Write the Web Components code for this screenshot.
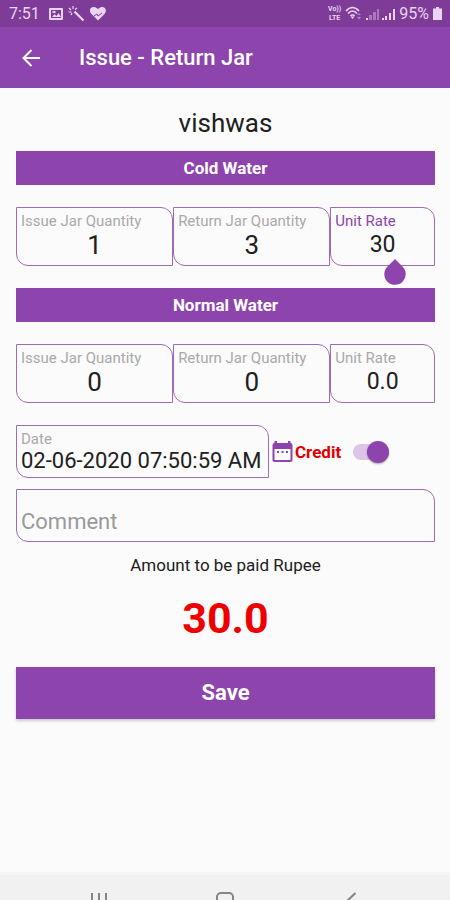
<!DOCTYPE html>
<html lang="en">
<head>
<meta charset="utf-8">
<meta name="viewport" content="width=device-width, initial-scale=1">
<title>Issue - Return Jar</title>
<style>
:root { --brand: #8e44ad; --brand-dark: #7e3c98; --page: #fbfbfb; --hint: #a9a9a9; --ink: #202020; }
body { margin: 0; background: var(--page); color: var(--ink); font-family: Roboto, "Liberation Sans", sans-serif; }
</style>
</head>
<body>
<issue-return-screen></issue-return-screen>
<script>
const define = (name, html, setup) => customElements.define(name, class extends HTMLElement {
  constructor() {
    super();
    this.attachShadow({ mode: 'open' }).innerHTML = html;
  }
  connectedCallback() { if (setup) setup(this, this.shadowRoot); }
});

define('status-bar', `
<style>
:host { display: flex; align-items: center; justify-content: space-between; height: 27px; padding: 0 8px 0 9px; background: var(--brand-dark); color: #e9d5f1; font-size: 16px; line-height: 20px; }
div { display: flex; align-items: center; gap: 4px; }
.left { gap: 9px; }
.lte { display: grid; font-size: 7px; line-height: 9px; font-weight: 700; text-align: center; }
svg { display: block; fill: currentColor; }
</style>
<div class="left">
  <span>7:51</span>
  <svg width="58" height="16" viewBox="0 0 58 16" aria-hidden="true">
    <path fill-rule="evenodd" d="M1 2h12q1 0 1 1v10q0 1-1 1H1q-1 0-1-1V3q0-1 1-1zm1 2v8h10V4zm1 7 2.500-3 2 2 2-3L12 11zM3.500 5h3v2h-3z"/>
    <path d="m25.500 5.500 9 9" stroke="currentColor" stroke-width="2.200"/>
    <path d="M24 0v3M20 2l2 2M19.500 6h3M28 2l-2 1.500M22 9l1-2" stroke="currentColor" stroke-width="1.200"/>
    <path d="M49 14.500 42.500 8C38 3 44-2 49 3c5-5 10.500 0 6.500 5z"/>
    <path d="m45 10 3-2 1 2 4-3" fill="none" stroke="#7e3c98"/>
  </svg>
</div>
<div>
  <span class="lte"><span>Vo))</span><span>LTE</span></span>
  <svg width="17" height="15" viewBox="0 0 17 15" aria-hidden="true">
    <path d="M1 5q6.500-7 13 0M3 7.500q4.500-5 9 0M5.500 10q2-2.500 4 0" fill="none" stroke="currentColor" stroke-width="1.700"/>
    <path d="m7.500 13-2-2.500h4z"/><path d="m12 9 2-2 2 2zm0 2h4l-2 2.500z" opacity=".5"/>
  </svg>
  <svg width="29" height="14" viewBox="0 0 29 14" aria-hidden="true">
    <path d="M0 11h2v2H0z"/><path d="M3 8h3v5H3zm4-3h3v8H7zm4-3h2v11h-2z" opacity=".4"/>
    <path d="M16 11h2v2h-2zm3-2h2v4h-2zm4-3h2v7h-2zm4-4h2v11h-2z"/>
  </svg>
  <span>95%</span>
  <svg width="9" height="13" viewBox="0 0 9 13" aria-hidden="true"><path d="M3 0h3v1.500h3V13H0V1.500h3z"/></svg>
</div>`);

define('app-bar', `
<style>
:host { display: flex; align-items: center; gap: 36px; height: 61px; padding: 0 19px; background: var(--brand); color: #fff; }
button { display: grid; place-items: center; width: 24px; height: 24px; padding: 0; border: 0; background: none; color: inherit; }
h1 { margin: 0; font-size: 22px; line-height: 28px; font-weight: 500; }
</style>
<button type="button" aria-label="Back"><svg width="24" height="24" viewBox="0 0 24 24" fill="none" stroke="currentColor" stroke-width="2"><path d="M21 12H4.500M12.500 4l-8 8 8 8"/></svg></button>
<h1><slot></slot></h1>`);

define('section-band', `
<style>
:host { display: block; background: var(--brand); color: #fff; }
h2 { margin: 0; padding: 6px; font-size: 17px; line-height: 22px; font-weight: 700; text-align: center; }
</style>
<h2><slot></slot></h2>`);

define('text-field', `
<style>
:host { display: block; min-width: 0; box-sizing: border-box; padding: 3px 4px; border: 1px solid #a06bb5; border-radius: 0 12px 0 12px; }
label { display: block; font-size: 15px; line-height: 20px; color: var(--hint); }
input { display: block; box-sizing: border-box; width: 100%; min-width: 0; height: 28px; margin-bottom: 3px; padding: 0; border: 0; outline: 0; background: none; color: var(--ink); font: 26px/28px Roboto, "Liberation Sans", sans-serif; text-align: center; }
input::placeholder { color: #999; opacity: 1; }
:host([active]) label { color: var(--brand); }
:host([kind="rate"]) input { font-size: 23px; }
:host([kind="date"]) input { height: 24px; font-size: 22px; line-height: 24px; text-align: left; margin-bottom: 1px; }
:host([kind="comment"]) { padding-top: 18px; }
:host([kind="comment"]) input { font-size: 22px; text-align: left; margin-bottom: 2px; }
</style>
<label for="value"></label><input id="value" type="text">`, (host, root) => {
  const label = root.querySelector('label'), input = root.querySelector('input');
  input.value = host.getAttribute('value') || '';
  if (host.getAttribute('kind') === 'comment') {
    label.remove();
    input.placeholder = host.getAttribute('label');
    input.setAttribute('aria-label', host.getAttribute('label'));
  } else label.textContent = host.getAttribute('label');
});

define('field-row', `
<style>
:host { display: grid; grid-template-columns: 3fr 3fr 2fr; margin: 22px 0; }
</style>
<slot></slot>`);

define('caret-handle', `
<style>
:host { position: absolute; left: 50%; top: 100%; margin-top: -8px; z-index: 1; }
svg { display: block; }
</style>
<svg width="24" height="27" viewBox="0 0 24 27" aria-hidden="true"><path fill="#8e44ad" d="m12 1 7.500 7.500a10.700 10.700 0 1 1-15 0z"/></svg>`);

define('field-anchor', `
<style>:host { display: grid; position: relative; min-width: 0; }</style>
<slot></slot>`);

define('credit-switch', `
<style>
:host { display: block; }
label { display: flex; align-items: center; gap: 12px; color: #e00000; font-size: 17px; line-height: 22px; font-weight: 700; }
input { appearance: none; display: flex; align-items: center; justify-content: flex-end; width: 36px; height: 16px; margin: 0; border-radius: 8px; background: #dcc5e6; }
input::before { content: ""; width: 22px; height: 22px; border-radius: 50%; background: var(--brand); box-shadow: 0 1px 2px #0005; }
input:not(:checked) { justify-content: flex-start; }
</style>
<label for="credit">Credit<input id="credit" type="checkbox" role="switch" checked></label>`);

define('date-row', `
<style>
:host { display: flex; align-items: center; margin-bottom: 11px; }
text-field { flex: 0 1 253px; }
button { display: block; margin: 0 2px 0 3px; padding: 0; border: 0; background: none; }
svg { display: block; }
</style>
<text-field kind="date" label="Date" value="02-06-2020 07:50:59 AM"></text-field>
<button type="button" aria-label="Pick a date"><svg width="21" height="24" viewBox="0 0 21 24"><path fill="#8e44ad" fill-rule="evenodd" d="M2.500 1h2.500v2h11V1h2.500v2q2 0 2 2v15q0 2-2 2h-16q-2 0-2-2V5q0-2 2-2zM2.500 9v11h16V9z"/><path fill="#8e44ad" d="M5 11h2v2H5zm4.500 0h2v2h-2zm4.500 0h2v2h-2z"/></svg></button>
<credit-switch></credit-switch>`);

define('amount-due', `
<style>
:host { display: block; text-align: center; }
p { margin: 0; padding: 12px 0 14px; font-size: 17px; line-height: 22px; }
output { display: block; color: #ee0000; font-size: 43px; line-height: 56px; font-weight: 700; }
</style>
<p>Amount to be paid Rupee</p><output>30.0</output>`);

define('save-button', `
<style>
:host { display: block; margin-top: 21px; }
button { display: block; width: 100%; padding: 12px; border: 0; background: var(--brand); color: #fff; font: 700 22px/28px Roboto, "Liberation Sans", sans-serif; box-shadow: 0 2px 3px #0003; }
</style>
<button type="button"><slot></slot></button>`);

define('navigation-bar', `
<style>
:host { display: grid; grid-template-columns: 1fr 1fr 1fr; justify-items: center; box-sizing: border-box; height: 28px; padding: 16px 36px 0; overflow: hidden; background: #f1f1f1; border-top: 3px solid #f5f5f5; }
button { display: block; height: 20px; padding: 0; border: 0; background: none; }
svg { display: block; fill: none; stroke: #858585; stroke-width: 2; }
</style>
<button type="button" aria-label="Recent apps"><svg width="18" height="18" viewBox="0 0 18 18"><path d="M2 1v16M9 1v16M16 1v16"/></svg></button>
<button type="button" aria-label="Home"><svg width="18" height="18" viewBox="0 0 18 18"><rect x="1" y="1" width="16" height="16" rx="4"/></svg></button>
<button type="button" aria-label="Back"><svg width="10" height="18" viewBox="0 0 10 18"><path d="M9.500 1 1 9l8.500 8"/></svg></button>`);

define('issue-return-screen', `
<style>
:host { display: flex; flex-direction: column; min-height: 100vh; }
main { flex: 1; padding: 15px 15px 16px 16px; }
.customer { margin: 0 0 8px; text-align: center; font-size: 26px; line-height: 40px; }
</style>
<status-bar></status-bar>
<app-bar>Issue - Return Jar</app-bar>
<main>
  <p class="customer">vishwas</p>
  <section-band>Cold Water</section-band>
  <field-row>
    <text-field label="Issue Jar Quantity" value="1"></text-field>
    <text-field label="Return Jar Quantity" value="3"></text-field>
    <field-anchor><text-field kind="rate" label="Unit Rate" value="30" active></text-field><caret-handle></caret-handle></field-anchor>
  </field-row>
  <section-band>Normal Water</section-band>
  <field-row>
    <text-field label="Issue Jar Quantity" value="0"></text-field>
    <text-field label="Return Jar Quantity" value="0"></text-field>
    <text-field kind="rate" label="Unit Rate" value="0.0"></text-field>
  </field-row>
  <date-row></date-row>
  <text-field kind="comment" label="Comment"></text-field>
  <amount-due></amount-due>
  <save-button>Save</save-button>
</main>
<navigation-bar></navigation-bar>`);
</script>
</body>
</html>
